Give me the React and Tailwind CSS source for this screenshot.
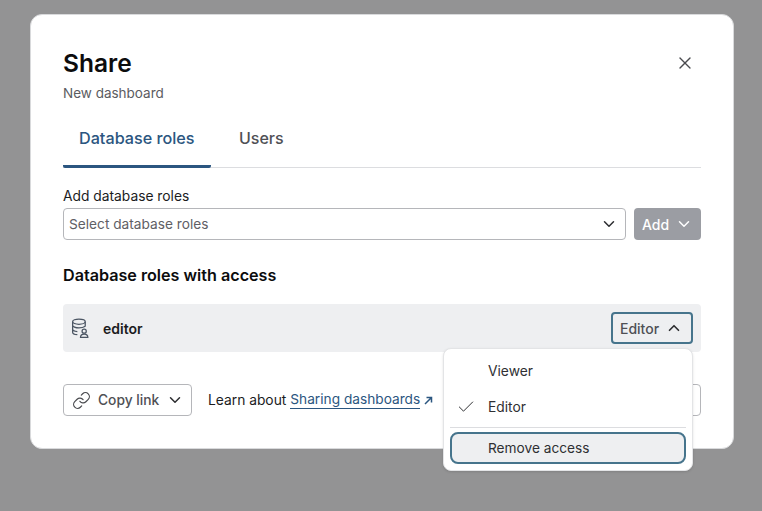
import { Check, ChevronDown, ChevronUp, Link, X } from "lucide-react";

const font = "font-['Inter','Liberation_Sans',sans-serif]";

function DatabaseUserIcon() {
  return (
    <svg width="19" height="21" viewBox="0 0 18 20" fill="none" stroke="#4b5563" strokeWidth="1.2">
      <ellipse cx="7.5" cy="3.5" rx="6" ry="2.5" />
      <path d="M1.5 3.5v10c0 1.2 2 2.2 4.5 2.4M13.5 3.5v4.5M1.5 7c0 1.3 2.7 2.5 6 2.5 2.300 0 4.600-.6 6-1.600M1.500 10.500c0 1.200 2 2.200 4.500 2.400" />
      <circle cx="12.500" cy="12.500" r="2" />
      <path d="M9 18.500c0-2 1.500-3.200 3.500-3.200s3.500 1.200 3.500 3.200z" />
    </svg>
  );
}

export default function App() {
  return (
    <div className={`${font} h-[511px] w-[762px] overflow-hidden bg-[#939394] pt-[14px] pl-[30px]`}>
      <div className="relative h-[435px] w-[704px] rounded-[12px] border border-[#d9dadc] bg-white pt-[32px] pr-[32px] pl-[32px]">
        <div className="flex items-start justify-between">
          <h1 className="text-[24.500px] leading-[32px] font-semibold text-[#0c0c0d]">Share</h1>
          <X size={20} strokeWidth={1.6} className="mt-[6px] mr-[6px] text-[#4a4b4f]" />
        </div>
        <p className="mt-[4px] text-[13.500px] leading-[20px] text-[#5b5c61]">New dashboard</p>

        <div className="mt-[10px] flex border-b border-[#dcdde0]">
          <div className="-mb-px w-[148px] rounded-b-[2px] border-b-[3px] border-[#2b5680] pt-[13px] pb-[15px] pl-[16px] text-[16.200px] leading-[24px] font-medium text-[#2b5680]">
            Database roles
          </div>
          <div className="ml-[28px] pt-[13px] pb-[15px] text-[16px] leading-[24px] font-medium text-[#4f5055]">
            Users
          </div>
        </div>

        <label className="mt-[18px] block text-[13.800px] leading-[20px] text-[#1b1c1e]">Add database roles</label>
        <div className="mt-[2px] flex gap-[8px]">
          <div className="flex h-[32px] flex-1 items-center justify-between rounded-[4px] border border-[#b5b6ba] pr-[7px] pl-[5px]">
            <span className="text-[13.700px] text-[#5f6065]">Select database roles</span>
            <ChevronDown size={18} strokeWidth={2} className="text-[#2c2d30]" />
          </div>
          <button className="flex h-[32px] w-[67px] items-center gap-[6px] rounded-[4px] bg-[#9b9da3] pl-[8px] text-[14px] font-medium text-white">
            Add
            <ChevronDown size={18} strokeWidth={2} />
          </button>
        </div>

        <h2 className="mt-[23px] text-[16.150px] leading-[24px] font-semibold text-[#0c0c0d]">Database roles with access</h2>

        <div className="mt-[17px] flex h-[48px] items-center justify-between rounded-[4px] bg-[#eeeff1] px-[8px]">
          <div className="flex items-center gap-[13px]">
            <DatabaseUserIcon />
            <span className="text-[14px] font-semibold text-[#1b1c1e]">editor</span>
          </div>
          <button className="flex h-[32px] w-[82px] items-center gap-[6px] rounded-[4px] border-2 border-[#46748c] bg-[#eeeff1] pl-[7px] text-[14px] font-medium text-[#4f5055]">
            Editor
            <ChevronUp size={18} strokeWidth={2.2} className="text-[#2c2d30]" />
          </button>
        </div>

        <div className="mt-[32px] flex items-center">
          <button className="flex h-[32px] w-[129px] items-center rounded-[4px] border border-[#b5b6ba] pl-[8px] text-[13.800px] font-medium text-[#4f5055]">
            <Link size={19} strokeWidth={1.5} className="text-[#4a4b4f]" />
            <span className="ml-[7px]">Copy link</span>
            <ChevronDown size={18} strokeWidth={2} className="ml-[7px] text-[#2c2d30]" />
          </button>
          <span className="ml-[16px] text-[13.800px] text-[#1b1c1e]">Learn about</span>
          <a className="ml-[4px] border-b border-[#2b5680] text-[13.700px] leading-[17px] text-[#2b5680]">Sharing dashboards</a>
          <svg width="9" height="9" viewBox="0 0 9 9" fill="none" stroke="#2b5680" strokeWidth="1.500" className="ml-[4px]">
            <path d="M1 8 7.500 1.500M2.500 1.500h5v5" />
          </svg>
          <div className="ml-auto h-[32px] w-[60px] rounded-[4px] border border-[#b5b6ba]" />
        </div>

        {/* role menu, sits over the footer */}
        <div className="absolute top-[333px] left-[412px] w-[250px] rounded-[8px] border border-[#e3e4e6] bg-white px-[6px] pt-[4px] pb-[6px] shadow-sm">
          <div className="flex h-[36px] items-center pl-[38px] text-[13.800px] text-[#2f3033]">Viewer</div>
          <div className="relative flex h-[36px] items-center pl-[38px] text-[13.800px] text-[#2f3033]">
            <Check size={20} strokeWidth={1.2} className="absolute top-[8px] left-[6px]" />
            Editor
          </div>
          <div className="mt-[2px] mb-[4px] border-t border-[#dcdde0]" />
          <div className="flex h-[32px] items-center rounded-[8px] border-2 border-[#46748c] bg-[#eeeff1] pl-[36px] text-[13.700px] text-[#2f3033]">
            Remove access
          </div>
        </div>
      </div>
    </div>
  );
}
